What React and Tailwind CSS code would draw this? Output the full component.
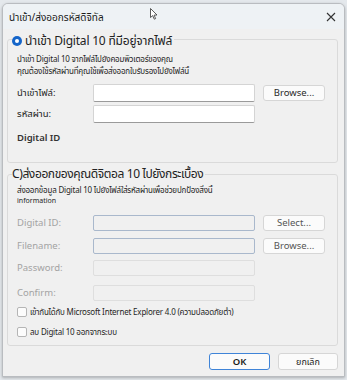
import React from 'react'

const font = { fontFamily: '"Noto Sans", "Noto Sans Thai", "Open Sans", sans-serif' }

function Row({ label, disabled, input, button, className }) {
  return (
    <div className={'flex items-center ' + className}>
      <div className={'w-[76px] text-[9.5px] leading-[12px] ' + (disabled ? 'text-[#a3a3a3]' : 'text-[#1f1f1f]')}>{label}</div>
      {input}
      {button}
    </div>
  )
}

function Btn({ children, className }) {
  return (
    <button className={'ml-[8px] w-[62px] h-[16px] rounded-[3px] border border-[#d6d6d6] bg-[#fbfbfb] text-[9.5px] leading-[14px] ' + className}>
      {children}
    </button>
  )
}

function Check({ children, className }) {
  return (
    <label className={'flex items-center h-[12px] ' + className}>
      <span className="w-[10px] h-[10px] rounded-[2px] border border-[#b5b5b5] bg-[#fcfcfc]"></span>
      <span className="ml-[3px] text-[8px] tracking-[-0.2px] leading-[12px] text-[#1f1f1f]">{children}</span>
    </label>
  )
}

export default function App() {
  return (
    <div className="relative w-[347px] h-[380px] bg-[#e4e8ec] pt-[3px] pl-[2px] overflow-hidden" style={font}>
      <div className="w-[343px] h-[374px] border border-[#b9bcc0] rounded-t-[6px] bg-[#f0f0f0] flex flex-col overflow-hidden shadow-[0_1px_3px_rgba(0,0,0,0.25)]">
        <div className="h-[25px] shrink-0 bg-[#eef2f5] flex items-center justify-between pl-[6px] pr-[8px]">
          <span className="text-[10px] leading-[12px] text-[#1a1a1a]">นำเข้า/ส่งออกรหัสดิจิทัล</span>
          <svg width="10" height="10" viewBox="0 0 10 10" className="text-[#333]">
            <path d="M1 1 L9 9 M9 1 L1 9" stroke="currentColor" strokeWidth="1.1" />
          </svg>
        </div>

        <div className="pl-[4px]">
          <fieldset className="w-[331px] mt-[2px] border border-[#dadada] rounded-[3px] pl-[9px] pr-0 pt-0 pb-[18px]">
            <legend className="ml-[-5px] h-[16px] pt-[4px] pr-[2px] flex items-center">
              <span className="w-[10px] h-[10px] rounded-full bg-[#1565c9] flex items-center justify-center">
                <span className="w-[4px] h-[4px] rounded-full bg-white"></span>
              </span>
              <span className="ml-[3px] text-[12px] tracking-[-0.2px] font-normal leading-[12px] text-[#222]">นำเข้า Digital 10 ที่มีอยู่จากไฟล์</span>
            </legend>
            <div className="mt-[6px] text-[8px] tracking-[-0.2px] leading-[12px] text-[#1f1f1f]">
              <div>นำเข้า Digital 10 จากไฟล์ไปยังคอมพิวเตอร์ของคุณ</div>
              <div>คุณต้องใช้รหัสผ่านที่คุณใช้เพื่อส่งออกใบรับรองไปยังไฟล์นี้</div>
            </div>
            <Row
              className="mt-[7px]"
              label="นำเข้าไฟล์:"
              input={<div className="w-[162px] h-[18px] bg-white border border-[#d4d4d4] border-b-[#9a9a9a] rounded-[2px]"></div>}
              button={<Btn className="text-[#2a2a2a]">Browse...</Btn>}
            />
            <Row
              className="mt-[3px]"
              label="รหัสผ่าน:"
              input={<div className="w-[162px] h-[18px] bg-white border border-[#d4d4d4] border-b-[#9a9a9a] rounded-[2px]"></div>}
            />
            <div className="mt-[9px] text-[9.5px] leading-[12px] font-semibold text-[#333]">Digital ID</div>
          </fieldset>

          <fieldset className="w-[331px] mt-[3px] border border-[#dadada] rounded-[3px] pl-[9px] pr-0 pt-0 pb-[7px]">
            <legend className="ml-[-5px] h-[16px] pr-[2px] flex items-center">
              <span className="text-[12px] tracking-[-0.4px] font-normal leading-[14px] text-[#222]">C)ส่งออกของคุณดิจิตอล 10 ไปยังกระเบื้อง</span>
            </legend>
            <div className="mt-[2px] text-[#1f1f1f]">
              <div className="text-[8px] tracking-[-0.2px] leading-[12px]">ส่งออกข้อมูล Digital 10 ไปยังไฟล์ใส่รหัสผ่านเพื่อช่วยปกป้องสิ่งนี้</div>
              <div className="text-[7px] leading-[9px]">information</div>
            </div>
            <Row
              className="mt-[10px]"
              disabled
              label="Digital ID:"
              input={<div className="w-[162px] h-[16px] bg-[#f0f0f0] border border-[#a9b8cc] rounded-[2px]"></div>}
              button={<Btn className="text-[#555]">Select...</Btn>}
            />
            <Row
              className="mt-[7px]"
              disabled
              label="Filename:"
              input={<div className="w-[162px] h-[16px] bg-[#f0f0f0] border border-[#a9b8cc] rounded-[2px]"></div>}
              button={<Btn className="text-[#555]">Browse...</Btn>}
            />
            <Row
              className="mt-[6px]"
              disabled
              label="Password:"
              input={<div className="w-[162px] h-[16px] bg-[#f0f0f0] border border-[#dedede] rounded-[2px]"></div>}
            />
            <Row
              className="mt-[9px]"
              disabled
              label="Confirm:"
              input={<div className="w-[162px] h-[16px] bg-[#f0f0f0] border border-[#dedede] rounded-[2px]"></div>}
            />
            <Check className="mt-[5px]">เข้ากันได้กับ Microsoft Internet Explorer 4.0 (ความปลอดภัยต่ำ)</Check>
            <Check className="mt-[8px]">ลบ Digital 10 ออกจากระบบ</Check>
          </fieldset>

          <div className="mt-[7px] w-[331px] flex justify-end gap-[8px]">
            <button className="w-[61px] h-[17px] rounded-[3px] border-[1.5px] border-[#3f84d8] bg-[#fbfbfb] text-[9.5px] font-semibold text-[#1a1a1a] leading-[13px]">OK</button>
            <button className="w-[60px] h-[17px] rounded-[3px] border border-[#d6d6d6] bg-[#fbfbfb] text-[9px] text-[#1a1a1a] leading-[14px]">ยกเลิก</button>
          </div>
        </div>
      </div>
      <svg className="absolute left-[150px] top-[8px]" width="8" height="12" viewBox="0 0 8 12">
        <path d="M0.5 0.5 L0.5 9.5 L2.7 7.6 L4.3 11.2 L5.6 10.6 L4.1 7.1 L7 7 Z" fill="#fff" stroke="#333" strokeWidth="0.8" strokeLinejoin="round" />
      </svg>
    </div>
  )
}
